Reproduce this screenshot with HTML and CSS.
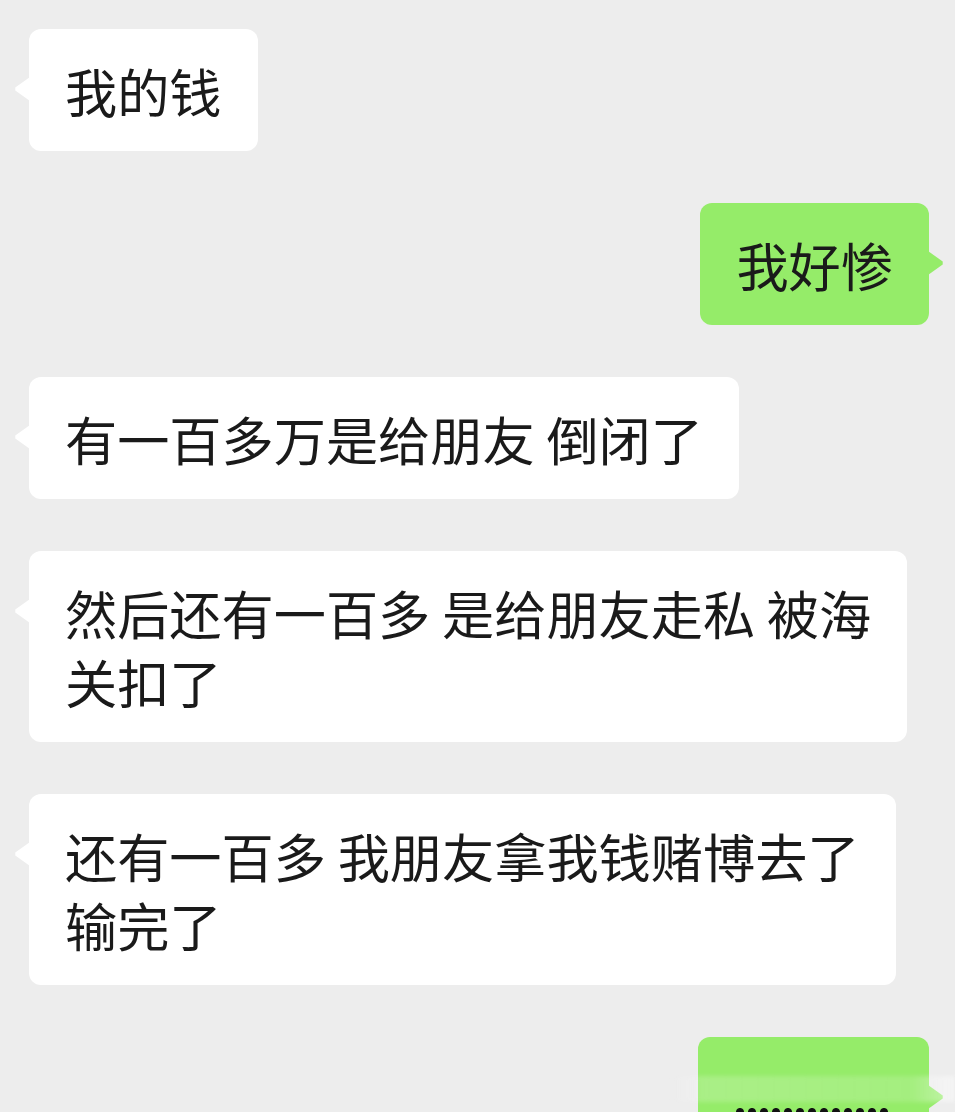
FILE: index.html
```html
<!DOCTYPE html>
<html lang="zh-CN">
<head>
    <meta charset="UTF-8">
    <meta name="viewport" content="width=device-width, initial-scale=1.0">
    <title>聊天记录</title>
    <link rel="stylesheet" href="styles.css">
</head>
<body>

    <main class="chat">
        <div class="msg">
            <div class="bubble">我的钱</div>
        </div>

        <div class="msg me">
            <div class="bubble">我好惨</div>
        </div>

        <div class="msg">
            <div class="bubble">有一百多万是给朋友 倒闭了</div>
        </div>

        <div class="msg">
            <div class="bubble">然后还有一百多 是给朋友走私 被海<br>关扣了</div>
        </div>

        <div class="msg">
            <div class="bubble">还有一百多 我朋友拿我钱赌博去了<br>输完了</div>
        </div>

        <div class="msg me">
            <div class="bubble cut">
                <div class="dots"></div>
            </div>
        </div>
    </main>

    <!-- blurred watermark strip over the last message -->
    <div class="watermark"></div>

</body>
</html>
```

FILE: styles.css
```css
/* Page */
html, body {
    margin: 0;
    padding: 0;
}

body {
    background-color: #ededed;
    color: #1a1a1a;
    font-family: "Noto Sans CJK SC", "Noto Sans", sans-serif;
    position: relative;
    min-height: 1112px;
    overflow: hidden;
}

/* Message list */
.chat {
    display: flex;
    flex-direction: column;
    gap: 52px;
    padding: 29px 26px 0 29px;
}

.msg {
    display: flex;
}

.msg.me {
    justify-content: flex-end;
}

/* Bubbles */
.bubble {
    position: relative;
    box-sizing: border-box;
    max-width: 900px;
    padding: 27px 36px 26px;
    background-color: #fff;
    border-radius: 12px;
    font-size: 52.2px;
    line-height: 69px;
    white-space: nowrap;
}

.bubble::before {
    content: "";
    position: absolute;
    top: 48px;
    left: -15px;
    width: 16px;
    height: 24px;
    background-color: inherit;
    clip-path: polygon(100% 0, 8% 44%, 8% 56%, 100% 100%);
}

.me .bubble {
    background-color: #95ec69;
}

.me .bubble::before {
    left: auto;
    right: -15px;
    clip-path: polygon(0 0, 92% 44%, 92% 56%, 0 100%);
}

/* Last (cut off) message */
.bubble.cut {
    width: 231px;
    padding-bottom: 60px;
}

.dots {
    width: 158px;
    height: 10px;
    margin-top: 43px;
    background: radial-gradient(circle, #111 3.5px, transparent 4.5px) 0 0 / 12px 10px repeat-x;
}

.watermark {
    position: absolute;
    top: 1076px;
    left: 668px;
    width: 287px;
    height: 26px;
    background: linear-gradient(90deg, rgba(255, 255, 255, 0) 0%, rgba(255, 255, 255, 0.2) 12%, rgba(255, 255, 255, 0.15) 85%, rgba(255, 255, 255, 0.45) 100%);
    filter: blur(2px);
}
```
